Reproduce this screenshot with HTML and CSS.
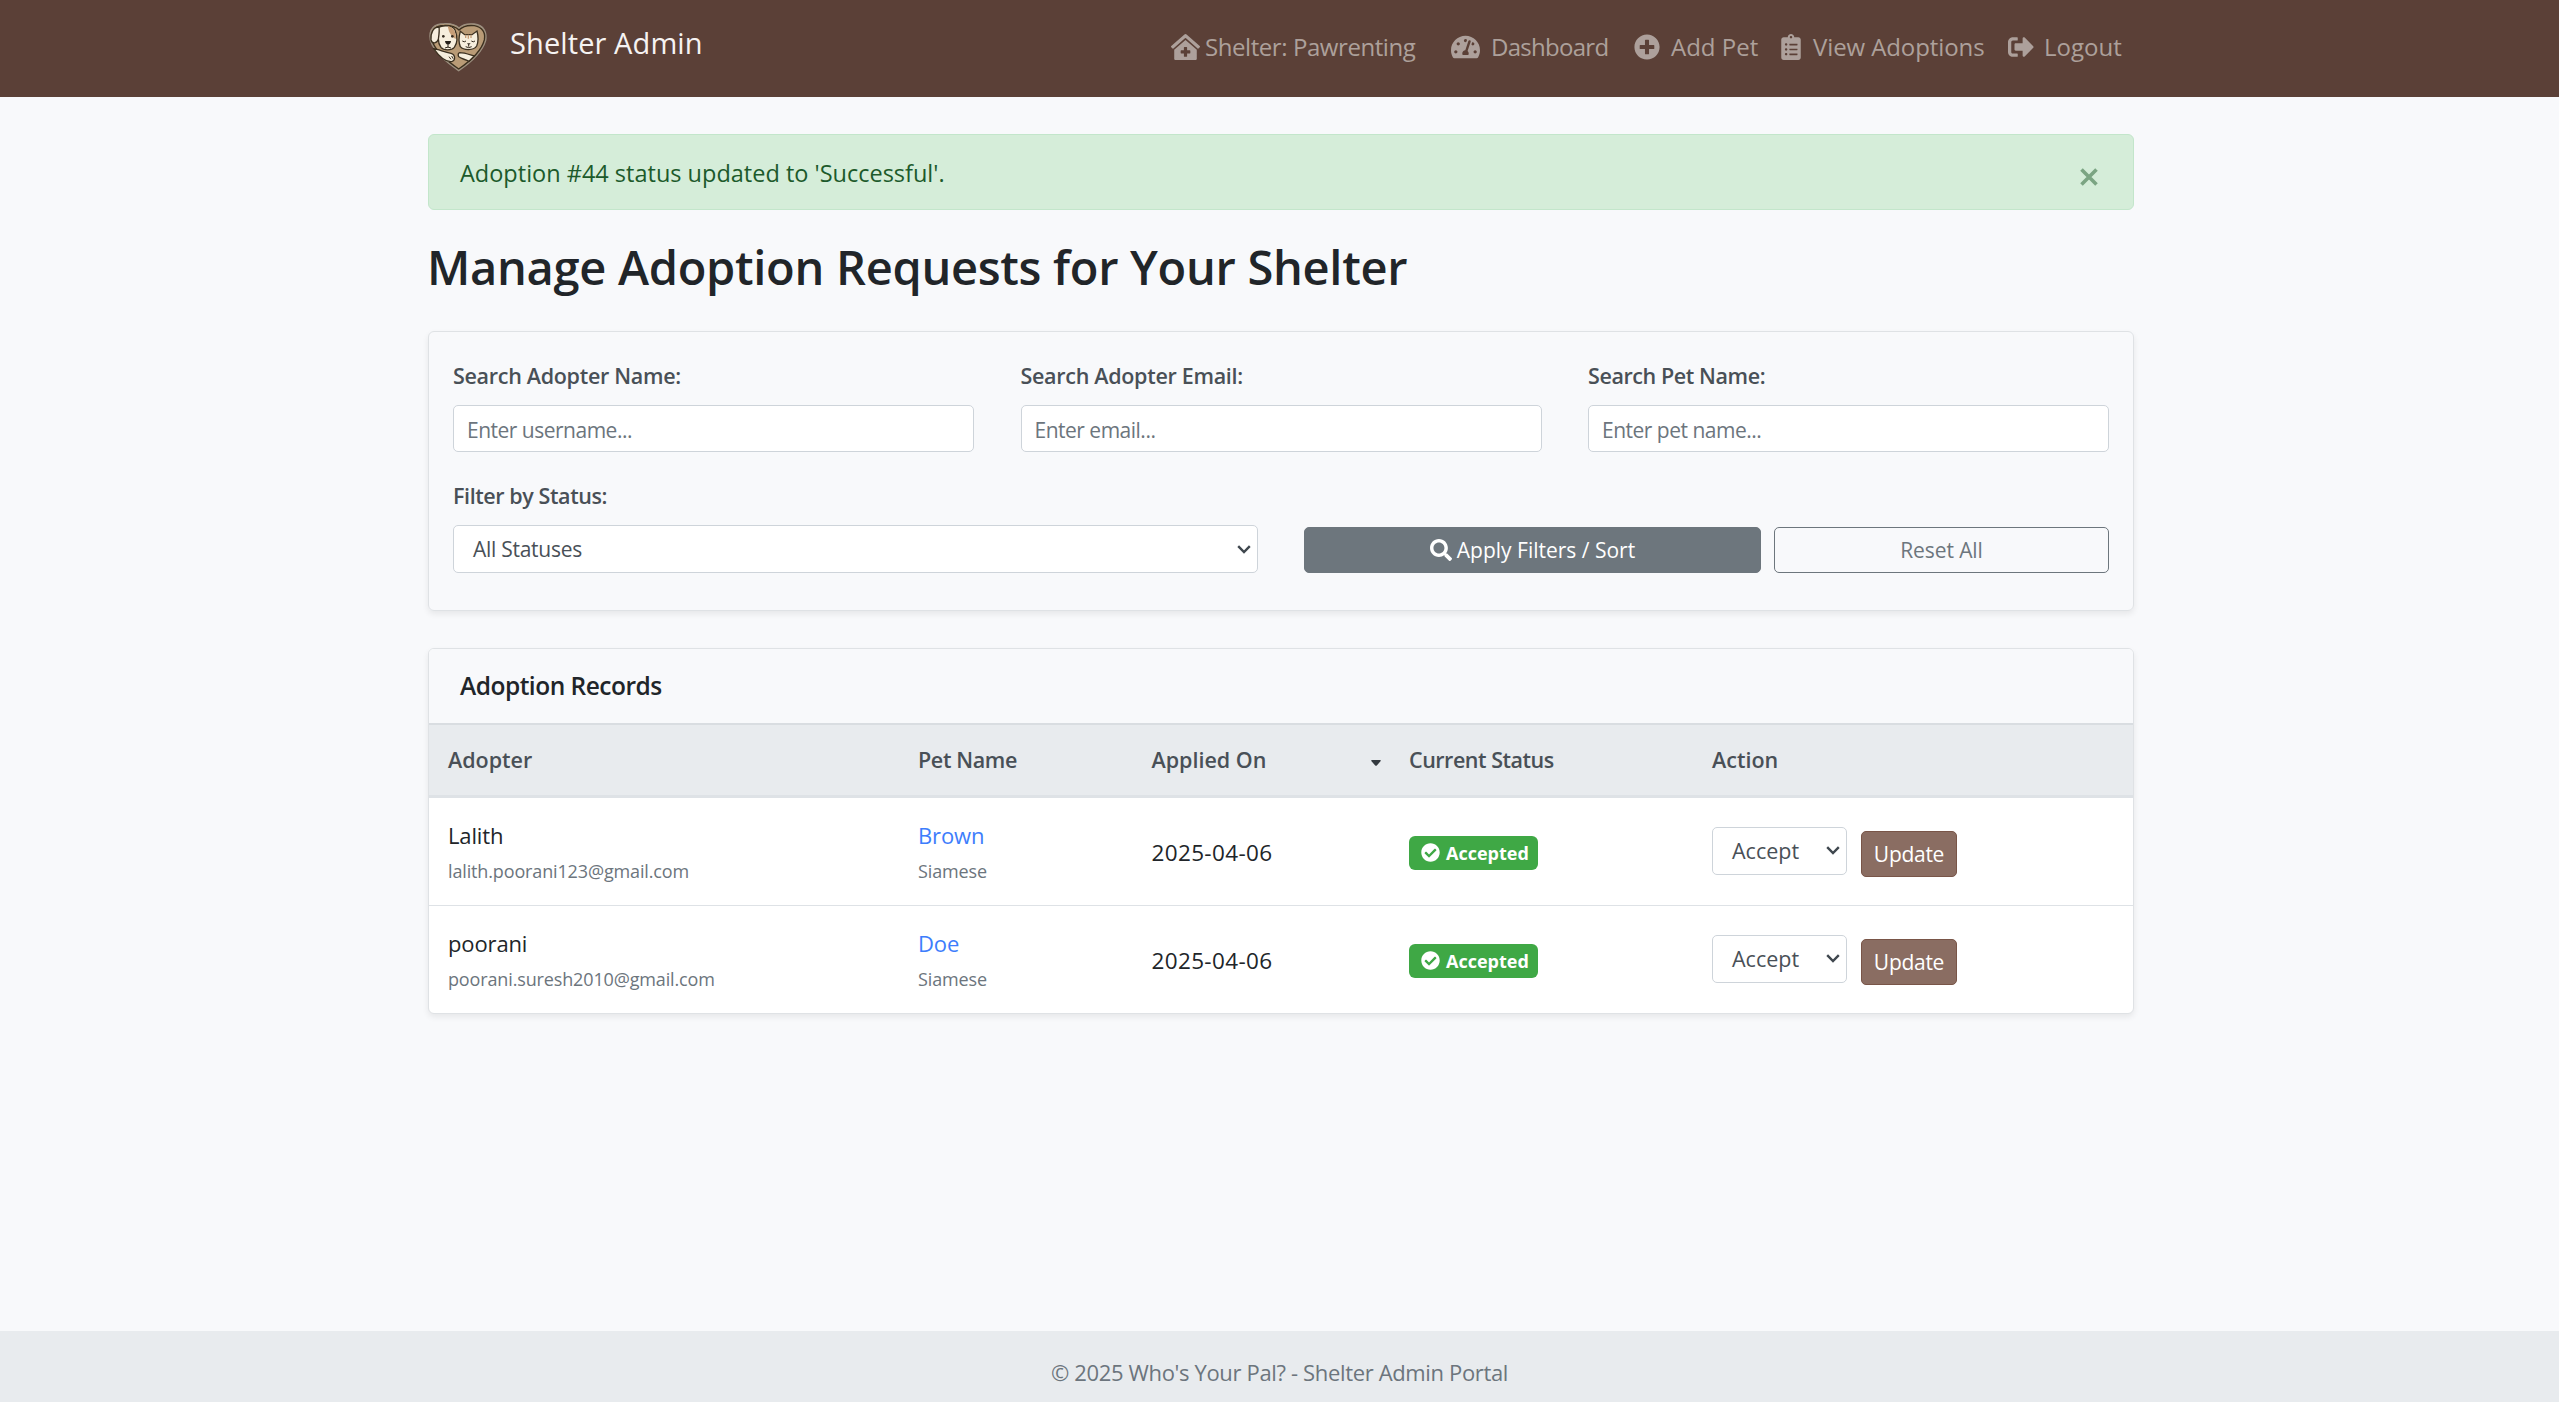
FILE: index.html
```html
<!DOCTYPE html>
<html lang="en">
<head>
<meta charset="utf-8">
<title>Shelter Admin</title>
<link rel="stylesheet" href="styles.css">
</head>
<body>
<header class="navbar">
  <div class="container navbar-inner">
    <a class="brand">
      <svg class="brand-logo" viewBox="0 0 198 174" aria-hidden="true">
        <path d="M101 158C76 140 28 108 16 66C10 32 28 17 58 17C78 16 92 20 102 30C112 20 130 16 148 18C178 22 186 44 182 68C170 108 128 140 101 158Z" fill="#b99b76" stroke="#9b8f80" stroke-width="4"/>
        <path d="M101 153C76 136 34 106 22 70C14 36 32 22 58 22C78 21 92 26 102 36C112 26 130 21 148 23C174 28 182 46 178 66C168 104 126 136 101 153Z" fill="#b99b76" stroke="#3b3020" stroke-width="4"/>
        <path d="M26 92C40 94 58 102 78 106C92 110 92 128 80 131C64 132 44 118 26 92Z" fill="#f6eedd" stroke="#3b3020" stroke-width="4"/>
        <path d="M104 104C118 104 134 110 148 114L132 130C122 124 106 122 101 116C98 110 100 105 104 104Z" fill="#f6eedd" stroke="#3b3020" stroke-width="4"/>
        <path d="M40 28C56 20 82 22 90 36C98 56 98 74 88 88C80 98 56 98 48 88C42 80 40 72 40 62Z" fill="#f6eedd" stroke="#3b3020" stroke-width="4"/>
        <path d="M68 25C84 26 92 38 93 62C84 62 78 52 72 40Z" fill="#c79e77"/>
        <path d="M42 27C26 26 16 44 18 66C22 80 36 76 40 64C42 50 44 38 42 27Z" fill="#f6eedd" stroke="#3b3020" stroke-width="4"/>
        <circle cx="55" cy="55" r="4" fill="#332a1f"/><circle cx="82" cy="55" r="4" fill="#332a1f"/>
        <path d="M60 69H78C78 76 72 80 69 80S60 76 60 69Z" fill="#241e18"/>
        <path d="M69 80V89M60 90Q69 84 78 90" fill="none" stroke="#332a1f" stroke-width="3"/>
        <path d="M106 40L119 50H141L156 39C160 54 160 72 155 84C146 98 116 98 106 86C100 72 102 54 106 40Z" fill="#f6eedd" stroke="#3b3020" stroke-width="4"/>
        <path d="M122 50V60M130 50V62M138 50V60" stroke="#c79e77" stroke-width="4"/>
        <path d="M112 69Q118 74 123 69M139 69Q145 74 150 69M131 80V86M122 86Q131 92 140 86" fill="none" stroke="#332a1f" stroke-width="3"/>
        <path d="M126 76H137L131 82Z" fill="#332a1f"/>
        <path d="M72 116L78 124M80 114L84 122" stroke="#3b3020" stroke-width="3"/>
      </svg>
      <span class="brand-name">Shelter Admin</span>
    </a>
    <nav class="nav">
      <a class="nav-link nav-shelter"><svg class="icon" viewBox="0 0 576 512" width="29" height="26"><path d="M288 115L69.47 307.71c-1.62 1.46-3.69 2.14-5.47 3.35V496a16 16 0 0 0 16 16h416a16 16 0 0 0 16-16V311.1c-1.7-1.16-3.72-1.82-5.26-3.2zm96 261a8 8 0 0 1-8 8h-56v56a8 8 0 0 1-8 8h-48a8 8 0 0 1-8-8v-56h-56a8 8 0 0 1-8-8v-48a8 8 0 0 1 8-8h56v-56a8 8 0 0 1 8-8h48a8 8 0 0 1 8 8v56h56a8 8 0 0 1 8 8zm186.69-139.72l-255.94-226a39.85 39.85 0 0 0-53.45 0l-256 226a16 16 0 0 0-1.21 22.6L25.5 282.7a16 16 0 0 0 22.6 1.21L277.42 81.63a16 16 0 0 1 21.17 0L527.91 283.9a16 16 0 0 0 22.6-1.21l21.4-23.82a16 16 0 0 0-1.22-22.59z"/></svg><span>Shelter: Pawrenting</span></a>
      <a class="nav-link nav-dashboard"><svg class="icon" viewBox="0 0 576 512" width="29" height="26"><path d="M288 32C128.94 32 0 160.94 0 320c0 52.8 14.25 102.26 39.06 144.8 5.61 9.62 16.3 15.2 27.44 15.2h443c11.14 0 21.83-5.58 27.44-15.2C561.75 422.26 576 372.8 576 320c0-159.06-128.94-288-288-288zm0 64c14.71 0 26.58 10.13 30.32 23.65-1.11 2.26-2.64 4.23-3.45 6.67l-9.22 27.67c-5.13 3.49-10.97 6.01-17.64 6.01-17.67 0-32-14.33-32-32S270.33 96 288 96zM96 384c-17.67 0-32-14.33-32-32s14.33-32 32-32 32 14.33 32 32-14.33 32-32 32zm48-160c-17.67 0-32-14.33-32-32s14.33-32 32-32 32 14.33 32 32-14.33 32-32 32zm246.77-72.41l-61.33 184C343.13 347.33 352 364.54 352 384c0 11.72-3.38 22.55-8.88 32H232.88c-5.5-9.45-8.88-20.28-8.88-32 0-33.94 26.5-61.43 59.9-63.59l61.34-184.01c4.17-12.56 17.73-19.45 30.36-15.17 12.57 4.19 19.35 17.79 15.17 30.36zm14.66 57.2l15.52-46.55c3.47-1.29 7.13-2.23 11.05-2.23 17.67 0 32 14.33 32 32s-14.33 32-32 32c-11.38-.01-20.89-6.28-26.57-15.22zM480 384c-17.67 0-32-14.33-32-32s14.33-32 32-32 32 14.33 32 32-14.33 32-32 32z"/></svg><span>Dashboard</span></a>
      <a class="nav-link nav-add"><svg class="icon" viewBox="0 0 512 512" width="26" height="26"><path d="M256 8C119 8 8 119 8 256s111 248 248 248 248-111 248-248S393 8 256 8zm144 276c0 6.600-5.400 12-12 12h-92v92c0 6.600-5.400 12-12 12h-56c-6.600 0-12-5.400-12-12v-92h-92c-6.600 0-12-5.400-12-12v-56c0-6.600 5.400-12 12-12h92v-92c0-6.600 5.400-12 12-12h56c6.600 0 12 5.400 12 12v92h92c6.600 0 12 5.400 12 12v56z"/></svg><span>Add Pet</span></a>
      <a class="nav-link nav-view"><svg class="icon" viewBox="0 0 384 512" width="20" height="26"><path d="M336 64h-80c0-35.300-28.700-64-64-64s-64 28.700-64 64H48C21.500 64 0 85.500 0 112v352c0 26.500 21.500 48 48 48h288c26.500 0 48-21.500 48-48V112c0-26.500-21.500-48-48-48zM96 424c-13.300 0-24-10.700-24-24s10.700-24 24-24 24 10.700 24 24-10.700 24-24 24zm0-96c-13.300 0-24-10.700-24-24s10.700-24 24-24 24 10.700 24 24-10.700 24-24 24zm0-96c-13.300 0-24-10.700-24-24s10.700-24 24-24 24 10.700 24 24-10.700 24-24 24zm96-192c13.300 0 24 10.700 24 24s-10.700 24-24 24-24-10.700-24-24 10.700-24 24-24zm128 368c0 4.400-3.600 8-8 8H168c-4.400 0-8-3.600-8-8v-16c0-4.400 3.600-8 8-8h144c4.400 0 8 3.600 8 8v16zm0-96c0 4.400-3.600 8-8 8H168c-4.400 0-8-3.600-8-8v-16c0-4.400 3.600-8 8-8h144c4.400 0 8 3.600 8 8v16zm0-96c0 4.400-3.600 8-8 8H168c-4.400 0-8-3.600-8-8v-16c0-4.400 3.600-8 8-8h144c4.400 0 8 3.600 8 8v16z"/></svg><span>View Adoptions</span></a>
      <a class="nav-link nav-logout"><svg class="icon" viewBox="0 0 512 512" width="26" height="26"><path d="M497 273L329 441c-15 15-41 4.500-41-17v-96H152c-13.300 0-24-10.700-24-24v-96c0-13.300 10.700-24 24-24h136V88c0-21.400 25.900-32 41-17l168 168c9.300 9.400 9.300 24.600 0 34zM192 436v-40c0-6.600-5.400-12-12-12H96c-17.700 0-32-14.300-32-32V160c0-17.700 14.300-32 32-32h84c6.600 0 12-5.400 12-12V76c0-6.600-5.400-12-12-12H96c-53 0-96 43-96 96v192c0 53 43 96 96 96h84c6.600 0 12-5.400 12-12z"/></svg><span>Logout</span></a>
    </nav>
  </div>
</header>

<main class="container">
  <div class="alert">
    <span class="alert-text">Adoption #44 status updated to 'Successful'.</span>
    <svg class="alert-close" viewBox="0 0 18 18" width="18" height="18" role="img" aria-label="Close"><path d="M1.500 1.500L16.500 16.500M16.500 1.500L1.500 16.500"/></svg>
  </div>
  <h1 class="page-title">Manage Adoption Requests for Your Shelter</h1>

  <form class="card filters">
    <div class="filter-row filter-row-search">
      <div class="field"><label class="label">Search Adopter Name:</label><input class="input" placeholder="Enter username..."></div>
      <div class="field"><label class="label">Search Adopter Email:</label><input class="input" placeholder="Enter email..."></div>
      <div class="field"><label class="label label-tight">Search Pet Name:</label><input class="input" placeholder="Enter pet name..."></div>
    </div>
    <div class="filter-row filter-row-status">
      <div class="field"><label class="label label-tight">Filter by Status:</label>
        <div class="select select-status"><span>All Statuses</span><svg class="chevron" viewBox="0 0 14 9" width="14" height="9"><path d="M1.200 1.200L7 7L12.800 1.200"/></svg></div>
      </div>
      <div class="filter-actions">
        <button type="button" class="btn btn-apply"><svg class="icon" viewBox="0 0 512 512" width="22" height="22"><path d="M505 442.700L405.300 343c-4.500-4.500-10.600-7-17-7H372c27.600-35.300 44-79.700 44-128C416 93.100 322.900 0 208 0S0 93.100 0 208s93.100 208 208 208c48.300 0 92.700-16.400 128-44v16.300c0 6.400 2.500 12.500 7 17l99.700 99.700c9.400 9.400 24.600 9.400 33.900 0l28.300-28.300c9.400-9.400 9.400-24.600.1-34zM208 336c-70.700 0-128-57.200-128-128 0-70.700 57.200-128 128-128 70.700 0 128 57.200 128 128 0 70.700-57.200 128-128 128z"/></svg><span>Apply Filters / Sort</span></button>
        <button type="button" class="btn btn-reset"><span>Reset All</span></button>
      </div>
    </div>
  </form>

  <section class="card records">
    <h2 class="records-title">Adoption Records</h2>
    <div class="records-head grid">
      <span class="th">Adopter</span>
      <span class="th th-pet">Pet Name</span>
      <span class="th th-applied"><span>Applied On</span><svg class="sort" viewBox="0 0 10 6" width="10" height="6"><path d="M1 0H9Q10.500 .3 9.300 1.500L5.800 5.500Q5 6.200 4.200 5.500L.7 1.500Q-.5 .3 1 0Z"/></svg></span>
      <span class="th th-status">Current Status</span>
      <span class="th">Action</span>
    </div>
    <div class="record grid">
      <div class="stack"><span class="name">Lalith</span><span class="small">lalith.poorani123@gmail.com</span></div>
      <div class="stack"><a class="name link">Brown</a><span class="small">Siamese</span></div>
      <div class="date">2025-04-06</div>
      <div class="badge"><svg class="icon" viewBox="0 0 512 512" width="19" height="19"><path d="M504 256c0 136.967-111.033 248-248 248S8 392.967 8 256 119.033 8 256 8s248 111.033 248 248zM227.314 387.314l184-184c6.248-6.248 6.248-16.379 0-22.627l-22.627-22.627c-6.248-6.249-16.379-6.249-22.628 0L216 308.118l-70.059-70.059c-6.248-6.248-16.379-6.248-22.628 0l-22.627 22.627c-6.248 6.248-6.248 16.379 0 22.627l104 104c6.249 6.249 16.379 6.249 22.628.001z"/></svg><span>Accepted</span></div>
      <div class="actions"><div class="select select-action"><span>Accept</span><svg class="chevron" viewBox="0 0 14 9" width="14" height="9"><path d="M1.200 1.200L7 7L12.800 1.200"/></svg></div><button type="button" class="btn btn-update"><span>Update</span></button></div>
    </div>
    <div class="record grid">
      <div class="stack"><span class="name">poorani</span><span class="small">poorani.suresh2010@gmail.com</span></div>
      <div class="stack"><a class="name link">Doe</a><span class="small">Siamese</span></div>
      <div class="date">2025-04-06</div>
      <div class="badge"><svg class="icon" viewBox="0 0 512 512" width="19" height="19"><path d="M504 256c0 136.967-111.033 248-248 248S8 392.967 8 256 119.033 8 256 8s248 111.033 248 248zM227.314 387.314l184-184c6.248-6.248 6.248-16.379 0-22.627l-22.627-22.627c-6.248-6.249-16.379-6.249-22.628 0L216 308.118l-70.059-70.059c-6.248-6.248-16.379-6.248-22.628 0l-22.627 22.627c-6.248 6.248-6.248 16.379 0 22.627l104 104c6.249 6.249 16.379 6.249 22.628.001z"/></svg><span>Accepted</span></div>
      <div class="actions"><div class="select select-action"><span>Accept</span><svg class="chevron" viewBox="0 0 14 9" width="14" height="9"><path d="M1.200 1.200L7 7L12.800 1.200"/></svg></div><button type="button" class="btn btn-update"><span>Update</span></button></div>
    </div>
  </section>
</main>
<footer class="footer"><span>© 2025 Who's Your Pal? - Shelter Admin Portal</span></footer>
</body>
</html>
```
FILE: styles.css
```css
* { box-sizing: border-box; }
html, body { margin: 0; height: 100%; }
body {
  display: flex;
  flex-direction: column;
  background: #f8f9fb;
  color: #212529;
  font-family: "Open Sans", "Noto Sans", sans-serif;
  font-size: 23px;
  line-height: 36px;
}
svg { display: block; flex: none; }
.icon { fill: currentColor; }
.container { box-sizing: content-box; width: 1706px; margin: 0 auto; padding-left: 3px; }

/* Top bar */
.navbar { height: 97px; background: #5b4037; }
.navbar-inner { display: flex; justify-content: space-between; align-items: center; height: 97px; }
.brand { display: flex; align-items: center; padding-bottom: 12px; color: #f6f3f2; font-size: 29px; letter-spacing: .1px; }
.brand-logo { width: 66px; height: 58px; margin: 8px 19px 0 -3px; }
.nav { display: flex; align-items: center; padding: 0 10px 4px 0; color: #ada09b; font-size: 24px; }
.nav-link { display: flex; align-items: center; gap: 11px; white-space: nowrap; }
.nav-shelter { width: 280px; gap: 5px; letter-spacing: -.43px; }
.nav-dashboard { width: 183px; letter-spacing: -.72px; }
.nav-add { width: 147px; }
.nav-view { width: 227px; gap: 12px; letter-spacing: -.1px; }
.nav-logout { width: 116px; gap: 10px; }

/* Status message */
.alert {
  display: flex;
  align-items: center;
  justify-content: space-between;
  height: 76px;
  margin-top: 37px;
  padding: 2px 35px 0 31px;
  border: 1px solid #c3e6cb;
  border-radius: 6px;
  background: #d5edd9;
  color: #1c5a2b;
  font-size: 23.5px;
}
.alert-close { margin-top: 8px; fill: none; stroke: #7ba583; stroke-width: 3.6; }
.page-title { margin: 27px 0 34px -1px; font-size: 47px; line-height: 60px; font-weight: 600; letter-spacing: -.3px; white-space: nowrap; }

/* Filters */
.card { border: 1px solid #dfe2e5; border-radius: 6px; box-shadow: 0 3px 6px rgba(0, 0, 0, .075); }
.filters { height: 280px; padding: 26px 24px 0; }
.filter-row { display: grid; column-gap: 46.5px; }
.filter-row-search { grid-template-columns: repeat(3, 1fr); }
.filter-row-status { grid-template-columns: 804.5px 1fr; margin-top: 26px; }
.field { display: flex; flex-direction: column; gap: 12px; }
.label { color: #495057; font-size: 21.5px; font-weight: 600; line-height: 35px; letter-spacing: -.3px; }
.label-tight { letter-spacing: -.41px; }
.input {
  width: 100%;
  height: 47px;
  padding: 2px 13px 0;
  border: 1px solid #ced4da;
  border-radius: 5px;
  background: #fff;
  font: 21px "Open Sans", sans-serif;
  letter-spacing: -.5px;
}
.input::placeholder { color: #6c757d; opacity: 1; }
.select {
  display: flex;
  align-items: center;
  justify-content: space-between;
  height: 48px;
  padding: 0 6px 0 19px;
  border: 1px solid #ced4da;
  border-radius: 5px;
  background: #fff;
  color: #495057;
  font-size: 21px;
}
.select-status { letter-spacing: -.27px; }
.chevron { fill: none; stroke: #3f474e; stroke-width: 2.4; }
.filter-actions { display: grid; grid-template-columns: 457px 335px; gap: 13px; align-items: end; }
.btn {
  display: flex;
  align-items: center;
  justify-content: center;
  height: 46px;
  padding: 0;
  border: 1px solid;
  border-radius: 5px;
  font: 21px/30px "Open Sans", sans-serif;
}
.btn-apply { gap: 5px; border-color: #6d767d; background: #6d767d; color: #fff; }
.btn-reset { border-color: #6d767d; background: transparent; color: #6d767d; letter-spacing: -.1px; }

/* Records table */
.records { margin-top: 37px; overflow: hidden; background: #fff; }
.records-title { margin: 0; height: 74px; padding-left: 31px; background: #f8f9fb; font-size: 24.5px; line-height: 73px; font-weight: 600; letter-spacing: -.5px; }
.grid { display: grid; grid-template-columns: 470px 233.5px 257.5px 303px 1fr; align-items: center; padding-left: 19px; }
.records-head {
  height: 75px;
  border-top: 2px solid #d9dde1;
  border-bottom: 3px solid #dee2e6;
  background: #e8ebee;
  color: #495057;
  font-size: 21.5px;
  font-weight: 600;
}
.th-pet { letter-spacing: -.36px; }
.th-status { letter-spacing: -.48px; }
.th-applied { display: flex; align-items: center; justify-content: space-between; padding-right: 28px; }
.sort { margin-top: 5px; fill: #343a40; }
.record { height: 107px; }
.record + .record { height: 108px; border-top: 1px solid #dee2e6; }
.stack { display: flex; flex-direction: column; padding-top: 2.5px; }
.name { font-size: 22px; letter-spacing: -.13px; }
.link { color: #3d7dfc; }
.small { color: #6c757d; font-size: 18px; letter-spacing: -.14px; }
.date { padding-top: 2px; font-size: 22.5px; letter-spacing: .35px; }
.badge {
  display: flex;
  align-items: center;
  gap: 6px;
  width: 129px;
  height: 34px;
  margin-top: 2px;
  padding-left: 12px;
  border-radius: 6px;
  background: #3fa845;
  color: #fff;
  font-size: 18px;
  font-weight: 700;
}
.badge span { padding-top: 1px; }
.actions { display: flex; align-items: center; gap: 14px; padding-top: 4px; }
.select-action { width: 135px; margin-bottom: 6px; font-size: 21.5px; }
.btn-update { width: 96px; border-color: #795548; background: #8a6d62; color: #fff; letter-spacing: -.28px; }

.footer { display: flex; justify-content: center; height: 71px; margin-top: auto; padding-top: 23px; background: #e8ebee; color: #6c757d; font-size: 22px; letter-spacing: -.35px; }
```
